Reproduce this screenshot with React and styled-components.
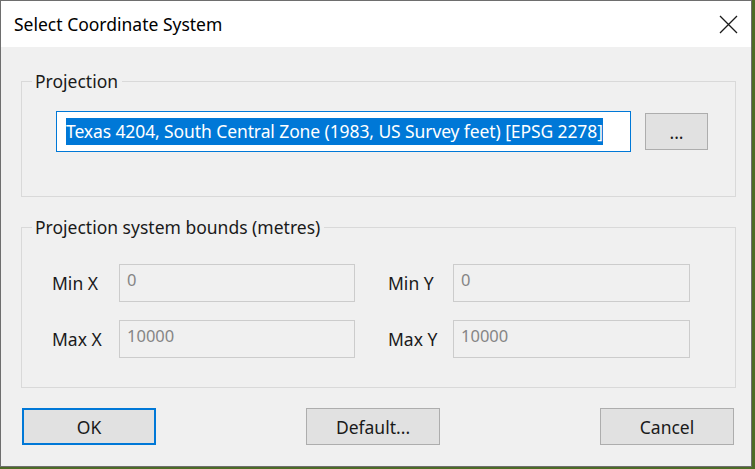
import styled, { createGlobalStyle } from 'styled-components';

const GlobalStyle = createGlobalStyle`
  html, body {
    margin: 0;
    padding: 0;
    background: #4d6b26;
  }
  body {
    font-family: "Noto Sans", "Liberation Sans", sans-serif;
    color: #1a1a1a;
  }
`;

const Window = styled.div`
  width: 750px;
  height: 465px;
  border: 1px solid #6e6e6e;
  background: #f0f0f0;
  display: flex;
  flex-direction: column;
`;

const TitleBar = styled.div`
  height: 46px;
  background: #ffffff;
  display: flex;
  align-items: center;
  justify-content: space-between;
  padding: 0 13px 0 13px;
`;

const Title = styled.span`
  font-size: 17.5px;
  color: #000;
`;

const CloseButton = styled.button`
  border: 0;
  background: transparent;
  padding: 0;
  width: 20px;
  height: 20px;
  display: flex;
  align-items: center;
  justify-content: center;
`;

const Body = styled.div`
  flex: 1;
  display: flex;
  flex-direction: column;
  padding: 23px 15px 0 20px;
`;

const Group = styled.fieldset`
  margin: ${({ $gap }) => $gap || 0}px 0 0 0;
  border: 1px solid #d9d9d9;
  padding: 0;
  min-width: 0;
`;

const GroupInner = styled.div`
  padding: ${({ $pad }) => $pad};
`;

const Legend = styled.legend`
  font-size: 17.5px;
  line-height: 22px;
  padding: 0 4px 0 3px;
  margin-left: 10px;
  color: #1a1a1a;
`;

const ProjectionRow = styled.div`
  display: flex;
  align-items: center;
  gap: 14px;
`;

const ProjectionField = styled.div`
  width: 575px;
  height: 41px;
  box-sizing: border-box;
  border: 1px solid #0078d7;
  background: #fff;
  display: flex;
  align-items: center;
  padding-left: 9px;
`;

const Selected = styled.span`
  background: #0078d7;
  color: #fff;
  font-size: 17.5px;
  line-height: 27px;
  white-space: nowrap;
  letter-spacing: -0.1px;
`;

const Button = styled.button`
  width: ${({ $w }) => $w}px;
  height: ${({ $h }) => $h || 37}px;
  margin-left: ${({ $offset }) => $offset || 0}px;
  box-sizing: border-box;
  background: #e1e1e1;
  border: ${({ $primary }) => ($primary ? '2px solid #0078d7' : '1px solid #adadad')};
  font-family: "Noto Sans", "Liberation Sans", sans-serif;
  font-size: 17.5px;
  color: #1a1a1a;
  padding: 0;
  display: flex;
  align-items: center;
  justify-content: center;
  flex-shrink: 0;
`;

const BoundsGrid = styled.div`
  display: grid;
  grid-template-columns: 67px 236px 33px 65px 237px;
  row-gap: 18px;
  align-items: center;
`;

const FieldLabel = styled.span`
  font-size: 17.5px;
  grid-column: ${({ $col }) => $col};
`;

const DisabledField = styled.div`
  height: 38px;
  box-sizing: border-box;
  border: 1px solid #cccccc;
  background: #f0f0f0;
  color: #858585;
  font-size: 16.5px;
  padding: 3px 0 0 7px;
  grid-column: ${({ $col }) => $col};
`;

const Footer = styled.div`
  display: flex;
  margin-top: 20px;
  padding-left: 1px;
`;

function CloseIcon() {
  return (
    <svg width="19" height="19" viewBox="0 0 19 19">
      <path d="M1 1 L18 18 M18 1 L1 18" stroke="#1a1a1a" strokeWidth="1.3" fill="none" />
    </svg>
  );
}

const bounds = [
  { label: 'Min X', value: '0', label2: 'Min Y', value2: '0' },
  { label: 'Max X', value: '10000', label2: 'Max Y', value2: '10000' },
];

export default function App() {
  return (
    <>
      <GlobalStyle />
      <Window>
        <TitleBar>
          <Title>Select Coordinate System</Title>
          <CloseButton>
            <CloseIcon />
          </CloseButton>
        </TitleBar>
        <Body>
          <Group>
            <Legend>Projection</Legend>
            <GroupInner $pad="19px 26px 44px 34px">
              <ProjectionRow>
                <ProjectionField>
                  <Selected>Texas 4204, South Central Zone (1983, US Survey feet) [EPSG 2278]</Selected>
                </ProjectionField>
                <Button $w={63} $h={37}>...</Button>
              </ProjectionRow>
            </GroupInner>
          </Group>
          <Group $gap={19}>
            <Legend>Projection system bounds (metres)</Legend>
            <GroupInner $pad="26px 44px 29px 30px">
              <BoundsGrid>
                {bounds.map((row) => (
                  <>
                    <FieldLabel key={row.label} $col={1}>{row.label}</FieldLabel>
                    <DisabledField key={row.label + 'v'} $col={2}>{row.value}</DisabledField>
                    <FieldLabel key={row.label2} $col={4}>{row.label2}</FieldLabel>
                    <DisabledField key={row.label2 + 'v'} $col={5}>{row.value2}</DisabledField>
                  </>
                ))}
              </BoundsGrid>
            </GroupInner>
          </Group>
          <Footer>
            <Button $w={134} $primary>OK</Button>
            <Button $w={134} $offset={150}>Default...</Button>
            <Button $w={134} $offset={160}>Cancel</Button>
          </Footer>
        </Body>
      </Window>
    </>
  );
}
